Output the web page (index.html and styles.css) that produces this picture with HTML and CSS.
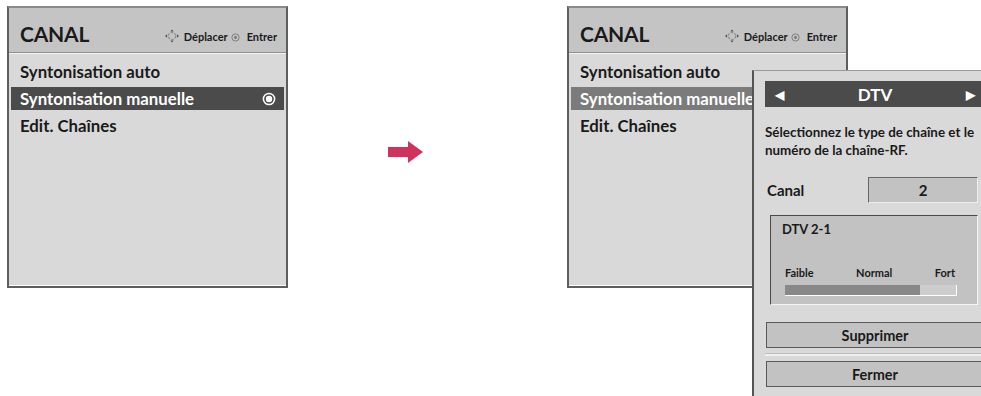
FILE: index.html
```html
<!DOCTYPE html>
<html lang="fr">
  <head>
    <meta charset="UTF-8" />
    <meta name="viewport" content="width=device-width, initial-scale=1.0" />
    <title>Canal - Syntonisation manuelle</title>
    <link rel="stylesheet" href="styles.css">
  </head>
  <body>
    <div class="scene">
      <!-- Menu before -->
      <div class="menu">
        <div class="menu-head">
          <span class="menu-title">CANAL</span>
          <span class="menu-help">
            <svg class="ico-nav" width="16" height="14" viewBox="0 0 16 14">
              <circle cx="8" cy="7" r="3.6" fill="none" stroke="#8a8a8a" stroke-width="1.2" stroke-dasharray="2.5 1.3" />
              <polygon points="8,0.5 6.3,2.6 9.7,2.6" fill="#555" />
              <polygon points="8,13.5 6.3,11.4 9.7,11.4" fill="#555" />
              <polygon points="1,7 3.1,5.3 3.1,8.7" fill="#555" />
              <polygon points="15,7 12.9,5.3 12.9,8.7" fill="#555" />
            </svg>
            Déplacer
            <svg class="ico-ok" width="9" height="9" viewBox="0 0 9 9">
              <circle cx="4.5" cy="4.5" r="3.6" fill="none" stroke="#777" stroke-width="0.9" />
              <circle cx="4.5" cy="4.5" r="1.4" fill="#777" />
            </svg>
            Entrer
          </span>
        </div>
        <ul class="menu-list">
          <li class="menu-item">Syntonisation auto</li>
          <li class="menu-item is-active">
            Syntonisation manuelle
            <svg class="ico-radio" width="14" height="14" viewBox="0 0 14 14">
              <circle cx="7" cy="7" r="5.6" fill="none" stroke="#fff" stroke-width="1.5" />
              <circle cx="7" cy="7" r="3.2" fill="#fff" />
            </svg>
          </li>
          <li class="menu-item">Edit. Chaînes</li>
        </ul>
      </div>

      <div class="next-arrow">
        <svg width="37" height="24" viewBox="0 0 37 24">
          <polygon points="0,7 20,7 20,1 35,12 20,23 20,17 0,17" fill="#d0325e" />
        </svg>
      </div>

      <!-- Menu after, with the dialog on top -->
      <div class="after">
        <div class="menu">
          <div class="menu-head">
            <span class="menu-title">CANAL</span>
            <span class="menu-help">
              <svg class="ico-nav" width="16" height="14" viewBox="0 0 16 14">
                <circle cx="8" cy="7" r="3.6" fill="none" stroke="#8a8a8a" stroke-width="1.2" stroke-dasharray="2.5 1.3" />
                <polygon points="8,0.5 6.3,2.6 9.7,2.6" fill="#555" />
                <polygon points="8,13.5 6.3,11.4 9.7,11.4" fill="#555" />
                <polygon points="1,7 3.1,5.3 3.1,8.7" fill="#555" />
                <polygon points="15,7 12.9,5.3 12.9,8.7" fill="#555" />
              </svg>
              Déplacer
              <svg class="ico-ok" width="9" height="9" viewBox="0 0 9 9">
                <circle cx="4.5" cy="4.5" r="3.6" fill="none" stroke="#777" stroke-width="0.9" />
                <circle cx="4.5" cy="4.5" r="1.4" fill="#777" />
              </svg>
              Entrer
            </span>
          </div>
          <ul class="menu-list">
            <li class="menu-item">Syntonisation auto</li>
            <li class="menu-item is-dim">Syntonisation manuelle</li>
            <li class="menu-item">Edit. Chaînes</li>
          </ul>
        </div>

        <div class="dialog">
          <div class="type-bar">
            <span class="tri">&#9664;</span>
            <span class="type-name">DTV</span>
            <span class="tri">&#9654;</span>
          </div>
          <p class="dialog-text">Sélectionnez le type de chaîne et le<br>numéro de la chaîne-RF.</p>
          <div class="channel-row">
            <span class="channel-label">Canal</span>
            <span class="channel-value">2</span>
          </div>
          <div class="signal">
            <div class="signal-name">DTV 2-1</div>
            <div class="signal-scale">
              <span>Faible</span>
              <span>Normal</span>
              <span>Fort</span>
            </div>
            <div class="signal-bar">
              <div class="signal-fill" style="width: 79%"></div>
            </div>
          </div>
          <button class="dlg-btn" type="button">Supprimer</button>
          <div class="dlg-sep"></div>
          <button class="dlg-btn" type="button">Fermer</button>
        </div>
      </div>
    </div>
  </body>
</html>
```

FILE: styles.css
```css
/* Page */
body {
  margin: 0;
  background: #fff;
  font-family: Lato, "Open Sans", Arial, sans-serif;
  font-weight: bold;
  color: #1a1a1a;
  width: 981px;
  height: 396px;
  overflow: hidden;
}

.scene {
  display: flex;
  align-items: flex-start;
  padding: 6px 0 0 7px;
}

/* Menu panel */
.menu {
  width: 277px;
  height: 278px;
  border: 2px solid #5e5e5e;
  border-top-color: #8a8a8a;
  background: #d9d9d9;
  box-shadow: inset 0 -1px 0 #fff;
  flex-shrink: 0;
}

.menu-head {
  height: 45px;
  background: #c4c4c4;
  border-bottom: 1px solid #8f8f8f;
  box-shadow: 0 1px 0 #f2f2f2;
  display: flex;
  align-items: flex-end;
  justify-content: space-between;
  padding: 0 9px 8px 11px;
  box-sizing: border-box;
}

.menu-title {
  font-size: 21px;
  line-height: 1;
  letter-spacing: -0.2px;
}

.menu-help {
  font-size: 11px;
  display: flex;
  align-items: center;
  gap: 2px;
  padding-bottom: 1px;
}

.ico-nav {
  margin-right: 2px;
}

.ico-ok {
  margin: 3px 5px 0 1px;
}

.menu-list {
  list-style: none;
  margin: 0;
  padding: 7px 2px 0;
  display: flex;
  flex-direction: column;
  gap: 4px;
}

.menu-item {
  height: 23px;
  line-height: 23px;
  font-size: 16.8px;
  padding: 0 8px 0 9px;
  display: flex;
  align-items: center;
  justify-content: space-between;
  white-space: nowrap;
}

.menu-item.is-active {
  background: #4b4b4b;
  color: #fff;
}

.menu-item.is-dim {
  background: #7b7b7b;
  color: #fff;
}

.next-arrow {
  margin: 134px 0 0 100px;
  width: 37px;
}

/* Right side */
.after {
  position: relative;
  margin-left: 142px;
}

.dialog {
  position: absolute;
  left: 185px;
  top: 64px;
  width: 250px;
  height: 340px;
  background: #d9d9d9;
  border-left: 2px solid #555;
  border-top: 1px solid #9a9a9a;
  padding: 10px 0 0 11px;
  box-sizing: border-box;
}

.type-bar {
  width: 226px;
  height: 26px;
  background: #4b4b4b;
  color: #fff;
  display: flex;
  align-items: center;
  justify-content: space-between;
  padding: 0 16px 0 10px;
  box-sizing: border-box;
  font-size: 16px;
}

.type-bar .tri {
  font-size: 12px;
}

.type-name {
  font-size: 17px;
}

.dialog-text {
  margin: 16px 0 0;
  font-size: 13.4px;
  line-height: 18px;
  white-space: nowrap;
}

.channel-row {
  display: flex;
  align-items: center;
  margin-top: 18px;
  padding-left: 2px;
}

.channel-label {
  width: 101px;
  font-size: 15px;
}

.channel-value {
  width: 110px;
  height: 26px;
  box-sizing: border-box;
  background: #c2c2c2;
  border: 1px solid #666;
  border-right-color: #eee;
  border-bottom-color: #eee;
  text-align: center;
  line-height: 24px;
  font-size: 15px;
}

.signal {
  margin: 12px 0 0 5px;
  width: 208px;
  height: 90px;
  box-sizing: border-box;
  background: #c2c2c2;
  border: 1px solid #4a4a4a;
  border-right-color: #f4f4f4;
  border-bottom-color: #f4f4f4;
  padding: 5px 20px 0 11px;
}

.signal-name {
  font-size: 13px;
}

.signal-scale {
  display: flex;
  justify-content: space-between;
  font-size: 11px;
  margin: 29px 2px 0 3px;
}

.signal-bar {
  margin: 6px 0 0 3px;
  height: 10px;
  background: #cdcdcd;
  border-right: 1px solid #fff;
  border-bottom: 1px solid #fff;
}

.signal-fill {
  height: 100%;
  background: #888;
}

.dlg-btn {
  display: block;
  width: 218px;
  height: 26px;
  margin: 17px 0 0 1px;
  background: #c2c2c2;
  border: 1px solid #5a5a5a;
  font-family: inherit;
  font-weight: bold;
  font-size: 14.5px;
  color: #1a1a1a;
  padding: 0;
}

.dlg-sep {
  height: 2px;
  margin: 5px 0 0 0;
  background: #efefef;
  border-top: 1px solid #bcbcbc;
}

.dlg-sep + .dlg-btn {
  margin-top: 5px;
}
```
